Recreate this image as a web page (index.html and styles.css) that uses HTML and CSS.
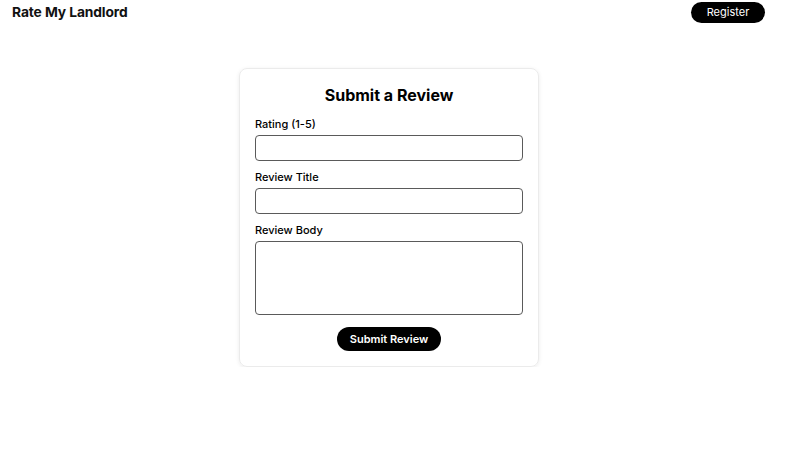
FILE: index.html
```html
<!DOCTYPE html>
<html>
<head>
<meta charset="utf-8">
<link rel="stylesheet" href="styles.css">
</head>
<body>
<div class="page">
<header class="topbar">
  <div class="brand">Rate My Landlord</div>
  <button class="btn-register">Register</button>
</header>
<main class="main">
  <form class="card">
    <h1 class="card-title">Submit a Review</h1>
    <div class="field">
      <label class="label">Rating (1-5)</label>
      <input class="input" type="text">
    </div>
    <div class="field">
      <label class="label">Review Title</label>
      <input class="input" type="text">
    </div>
    <div class="field">
      <label class="label">Review Body</label>
      <textarea class="textarea"></textarea>
    </div>
    <div class="actions">
      <button class="btn-submit" type="button">Submit Review</button>
    </div>
  </form>
</main>
</div>
</body>
</html>
```
FILE: styles.css
```css
* { box-sizing: border-box; }
html, body { margin: 0; padding: 0; background: #fff; }
body { font-family: Inter, "Noto Sans", sans-serif; color: #000; }
.page { width: 778px; }
.topbar {
  display: flex;
  justify-content: space-between;
  align-items: center;
  padding: 1px 13px 0 12px;
  height: 23px;
}
.brand { font-size: 13.8px; font-weight: 700; letter-spacing: -0.1px; color: #111; }
.btn-register {
  background: #000; color: #fff; border: none;
  border-radius: 999px; height: 21px; width: 74px;
  font-family: inherit; font-size: 11px; font-weight: 400;
  padding: 0;
}
.main { display: flex; justify-content: center; padding-top: 45px; }
.card {
  width: 300px;
  border: 1px solid #ebebeb;
  border-radius: 8px;
  box-shadow: 0 1px 4px rgba(0,0,0,0.08);
  padding: 15px 15px 15px;
  display: flex; flex-direction: column; gap: 8px;
}
.card-title {
  margin: 0 0 2px; text-align: center;
  font-size: 16px; font-weight: 700; line-height: 22px;
}
.field { display: flex; flex-direction: column; gap: 3px; }
.label { font-size: 11px; font-weight: 500; line-height: 16px; }
.input, .textarea {
  width: 100%;
  border: 1px solid #5a5a5a;
  border-radius: 4px;
  font-family: inherit;
  display: block;
  margin: 0;
}
.input { height: 26px; }
.textarea { height: 74px; resize: none; }
.actions { display: flex; justify-content: center; padding-top: 4px; }
.btn-submit {
  background: #000; color: #fff; border: none;
  border-radius: 999px; height: 24px; width: 104px;
  font-family: inherit; font-size: 11px; font-weight: 600; padding: 0;
}
```
